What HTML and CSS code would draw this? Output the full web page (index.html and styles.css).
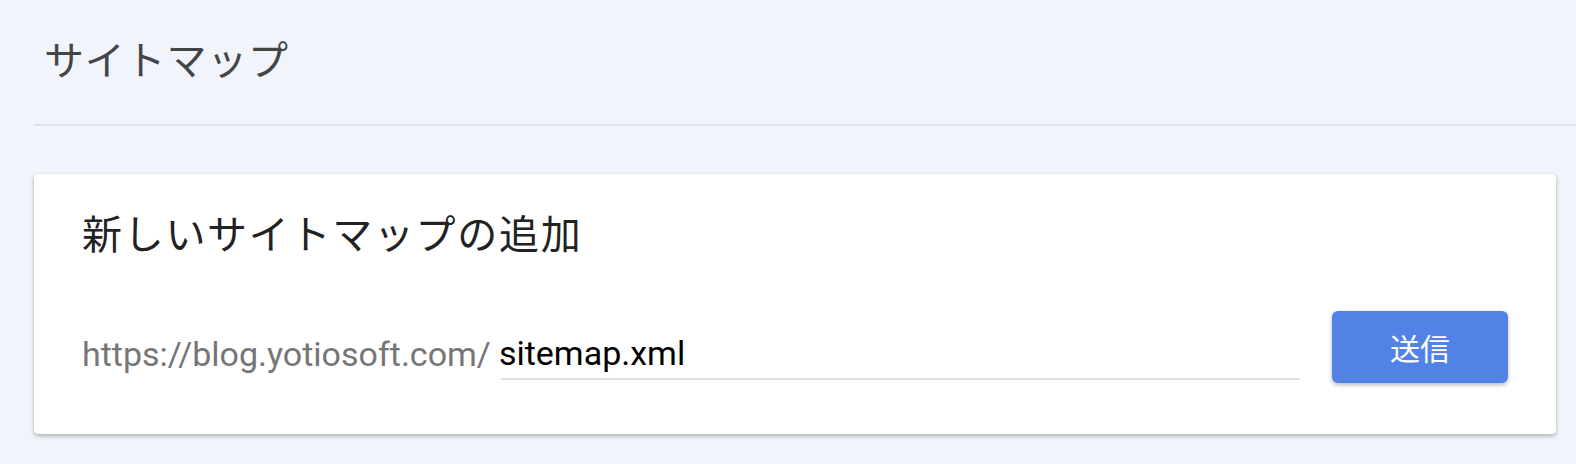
FILE: index.html
```html
<!DOCTYPE html>
<html lang="ja">
<head>
<meta charset="utf-8">
<title>サイトマップ</title>
<link rel="stylesheet" href="styles.css">
</head>
<body>
<div class="page">
  <header class="page-header">
    <h1 class="page-title">サイトマップ</h1>
  </header>
  <section class="card">
    <h2 class="card-title">新しいサイトマップの追加</h2>
    <form class="add-row">
      <span class="prefix">https://blog.yotiosoft.com/</span>
      <div class="field"><span class="field-value">sitemap.xml</span></div>
      <button type="button" class="submit">送信</button>
    </form>
  </section>
</div>
</body>
</html>
```

FILE: styles.css
```css
html, body {
  margin: 0;
  padding: 0;
  background: #f1f4fb;
}
body {
  font-family: Roboto, "Noto Sans CJK JP", sans-serif;
  width: 1576px;
  height: 464px;
  overflow: hidden;
}
.page {
  padding-left: 34px;
}
.page-header {
  border-bottom: 2px solid #dfe2e7;
  height: 126px;
  box-sizing: border-box;
}
.page-title {
  margin: 0;
  padding: 34px 0 0 10px;
  font-family: "Noto Sans CJK JP", sans-serif;
  font-weight: 400;
  font-size: 40px;
  line-height: 48px;
  letter-spacing: 0.8px;
  color: #444547;
}
.card {
  margin: 48px 20px 0 0;
  background: #fff;
  border-radius: 4px;
  box-shadow: 0 2px 4px rgba(0,0,0,0.28), 0 0 2px rgba(0,0,0,0.06);
  height: 260px;
  box-sizing: border-box;
  padding: 34px 48px 0 48px;
}
.card-title {
  margin: 0;
  font-family: "Noto Sans CJK JP", sans-serif;
  font-weight: 400;
  font-size: 40px;
  line-height: 48px;
  letter-spacing: 1.7px;
  color: #222;
}
.add-row {
  display: flex;
  align-items: center;
  margin-top: 55px;
  height: 72px;
}
.prefix {
  font-family: Roboto, sans-serif;
  font-size: 34px;
  color: #767676;
  margin-right: 10px;
  padding-top: 14px;
}
.field {
  flex: 1;
  border-bottom: 2px solid #e0e0e0;
  height: 52px;
  margin-top: 14px;
  box-sizing: border-box;
}
.field-value {
  font-family: Roboto, sans-serif;
  font-size: 34px;
  color: #000;
  line-height: 50px;
  margin-left: -2px;
}
.submit {
  margin-left: 32px;
  width: 176px;
  height: 72px;
  border: 0;
  border-radius: 6px;
  background: #5282e6;
  color: #fff;
  font-family: "Noto Sans CJK JP", sans-serif;
  font-size: 30px;
  box-shadow: 0 2px 4px rgba(0,0,0,0.28);
  padding: 0;
}
```
